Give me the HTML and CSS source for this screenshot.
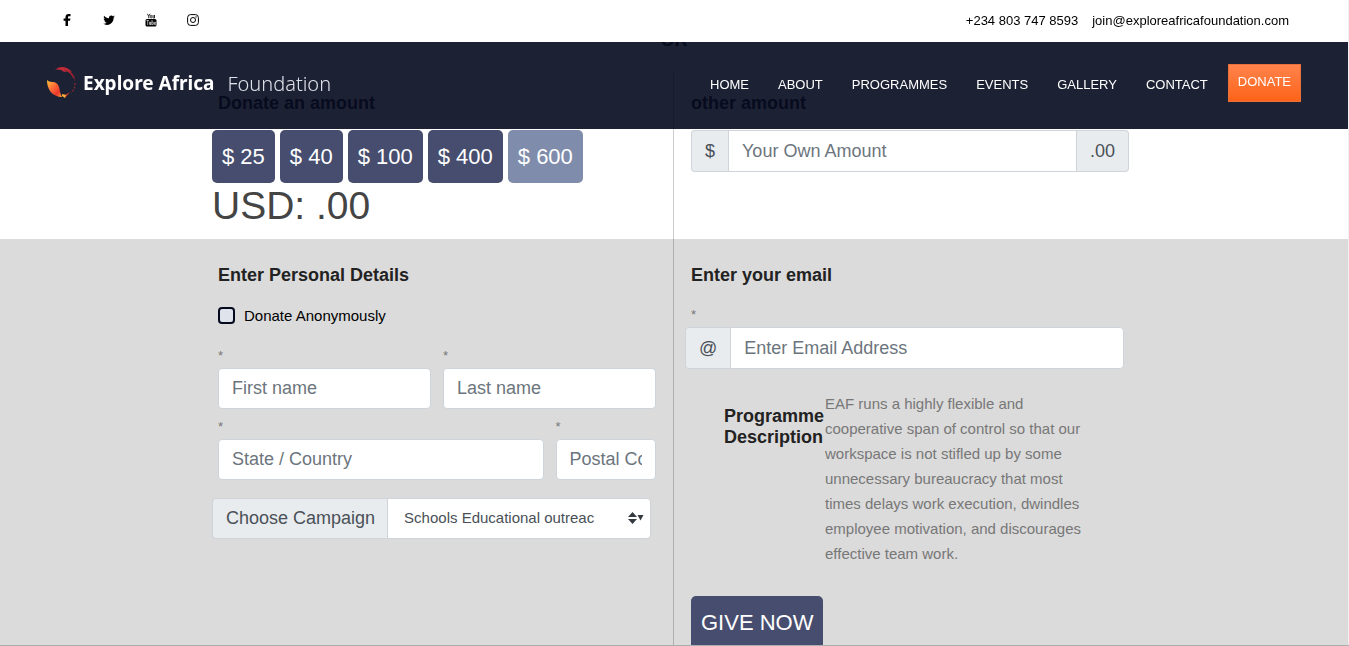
FILE: index.html
```html
<!DOCTYPE html>
<html lang="en">
<head>
<meta charset="utf-8">
<meta name="viewport" content="width=device-width, initial-scale=1">
<title>Explore Africa Foundation - Donate</title>
<link rel="stylesheet" href="styles.css">
</head>
<body>
<header class="site-header">
  <div class="topbar">
    <div class="social">
      <a href="#" aria-label="Facebook"><svg width="14" height="14" viewBox="0 0 14 14"><path d="M10.500 1v2.200H9.100c-.9 0-1.100.4-1.100 1v1.200h2.400L10 7.700H8V13H5.500V7.700H3.600V5.400h1.900V4c0-2 1.200-3.100 3-3.100z"/></svg></a>
      <a href="#" aria-label="Twitter"><svg width="14" height="14" viewBox="-2 -2 28 28"><path d="M23.600 5c-.9.400-1.800.600-2.700.8 1-.6 1.700-1.500 2.100-2.600-.9.500-1.900.9-3 1.100a4.800 4.800 0 0 0-8.100 4.300C8 8.400 4.500 6.500 2.100 3.600a4.800 4.800 0 0 0 1.500 6.300c-.8 0-1.500-.2-2.200-.6 0 2.300 1.600 4.300 3.800 4.800-.7.200-1.400.2-2.100.1.600 1.900 2.400 3.200 4.400 3.300A9.500 9.500 0 0 1 .5 19.500 13.500 13.500 0 0 0 21.200 7.500C22.200 6.800 23 6 23.600 5z"/></svg></a>
      <a href="#" aria-label="YouTube"><svg width="14" height="14" viewBox="0 0 14 14"><path d="M3.400.8l1.300 2.500v2M6 .8L4.700 3.300" fill="none" stroke="#000" stroke-width=".8"/><rect x="6.300" y="2.300" width="1.500" height="2.800" rx=".7" fill="none" stroke="#000" stroke-width=".7"/><path d="M9 2v2.600c0 .7.900.5 1.400 0V2v3.300" fill="none" stroke="#000" stroke-width=".7"/><rect x="1.500" y="6" width="11" height="7.400" rx="1.500"/><path d="M2.500 7.500h2.400M3.700 7.500v4.500M5.500 8.800v2.500c0 .7.800.5 1.300 0V8.800v3.200M8 7v5M8 9.300c1-.7 1.400-.3 1.400.3v1.300c0 .8-.5 1-1.400.5M11.800 11c0 1.200-1.400 1.200-1.400 0V9.800c0-1.200 1.400-1.200 1.400 0v.5h-1.400" fill="none" stroke="#fff" stroke-width=".6"/></svg></a>
      <a href="#" aria-label="Instagram"><svg width="14" height="14" viewBox="0 0 14 14" fill="none" stroke="#000"><rect x="1.600" y="1.600" width="10.800" height="10.800" rx="3"/><circle cx="7" cy="7" r="2.500"/><circle cx="10" cy="4" r=".7" fill="#000" stroke="none"/></svg></a>
    </div>
    <div class="contact"><a href="#">+234 803 747 8593</a><a href="#">join@exploreafricafoundation.com</a></div>
  </div>
  <div class="navbar">
    <a class="brand" href="#">
      <svg width="32" height="34" viewBox="0 0 32 34" aria-hidden="true">
        <defs><linearGradient id="ember" x1="0" y1="0" x2="1" y2="1"><stop offset="0" stop-color="#ffc83a"/><stop offset=".4" stop-color="#ff7038"/><stop offset=".75" stop-color="#e9372c"/><stop offset="1" stop-color="#f9a52f"/></linearGradient></defs>
        <path d="M1 14c1 1 3 2 5 2 4 0 6 2 7 5 1 3 1 7 3 10-4 0-9-2-12-6-2-3-3-7-3-11z" fill="url(#ember)"/>
        <path d="M9 4c4-4 11-4 16 1l1 2c-2-2-5-2-8-1-2-2-5-3-9-2z" fill="#c42a38"/>
        <path d="M18 4c4 0 8 4 10 8" fill="none" stroke="#a82835" stroke-width="1.500"/>
        <path d="M23 5c4 2 7 7 6 11l-1-4c-1-3-3-5-5-7z" fill="#7e202f"/>
        <path d="M29 17c0 4-1 7-4 10" fill="none" stroke="#8a2b2c" stroke-width="1.300" stroke-dasharray="2 1.500"/>
        <path d="M24 26c-1 2-3 3-5 6-1-1-2-2-2-3 2 0 5-1 7-3z" fill="#d9452d"/>
        <path d="M16 28l4 1-1 3-3-2z" fill="#f6ad35"/>
      </svg>
      <span class="brand-name">Explore Africa</span>
      <span class="brand-kind">Foundation</span>
    </a>
    <nav class="menu">
      <a href="#">HOME</a><a href="#">ABOUT</a><a href="#">PROGRAMMES</a><a href="#">EVENTS</a><a href="#">GALLERY</a><a href="#">CONTACT</a>
      <a class="donate" href="#">DONATE</a>
    </nav>
  </div>
</header>
<main>
  <form class="donation">
    <section class="band amounts">
      <h4 class="or">OR</h4>
      <div class="columns">
        <div class="column">
          <h4>Donate an amount</h4>
          <div class="outdent presets">
            <button type="button">$ 25</button><button type="button">$ 40</button><button type="button">$ 100</button><button type="button">$ 400</button><button type="button" class="active">$ 600</button>
          </div>
          <p class="outdent total">USD: .00</p>
        </div>
        <div class="column">
          <h4><label for="own">other amount</label></h4>
          <div class="group"><span class="addon">$</span><input id="own" type="text" placeholder="Your Own Amount"><span class="addon">.00</span></div>
        </div>
      </div>
    </section>
    <section class="band details">
      <div class="columns">
        <div class="column">
          <h4>Enter Personal Details</h4>
          <label class="check"><input type="checkbox">Donate Anonymously</label>
          <div class="fields">
            <div class="field half"><label for="first">*</label><input id="first" type="text" placeholder="First name"></div>
            <div class="field half"><label for="last">*</label><input id="last" type="text" placeholder="Last name"></div>
            <div class="field wide"><label for="state">*</label><input id="state" type="text" placeholder="State / Country"></div>
            <div class="field narrow"><label for="postal">*</label><input id="postal" type="text" placeholder="Postal Code"></div>
          </div>
          <div class="group outdent campaign">
            <label class="addon" for="campaign">Choose Campaign</label>
            <div class="select">
              <select id="campaign"><option>Schools Educational outreac</option></select>
              <svg width="16" height="12" viewBox="0 0 16 12" aria-hidden="true"><path d="M0 5L4.500 0 9 5zM0 7h9l-4.500 5zM9.500 3h6L12.500 8.500z" fill="#343a40"/></svg>
            </div>
          </div>
        </div>
        <div class="column">
          <h4>Enter your email</h4>
          <div class="field email"><label for="email">*</label>
            <div class="group outdent"><span class="addon at">@</span><input id="email" type="email" placeholder="Enter Email Address"></div>
          </div>
          <div class="programme">
            <h4>Programme Description</h4>
            <p>EAF runs a highly flexible and cooperative span of control so that our workspace is not stifled up by some unnecessary bureaucracy that most times delays work execution, dwindles employee motivation, and discourages effective team work.</p>
          </div>
          <button class="give" type="submit">GIVE NOW</button>
        </div>
      </div>
    </section>
  </form>
</main>
</body>
</html>
```
FILE: styles.css
```css
* { box-sizing: border-box; }
body {
  margin: 0;
  height: 100vh;
  overflow: hidden;
  font-family: "Liberation Sans", Arial, sans-serif;
  font-size: 15px;
  line-height: 25px;
  color: #777;
  background: #fff;
  border-right: 1px solid #f0f0f0;
}
body::after {
  content: "";
  position: fixed;
  inset: auto 0 0;
  height: 1px;
  background: #adadad;
}
a { text-decoration: none; color: inherit; }
p { margin: 0; }
h4 { margin: 0; font-size: 18px; line-height: 21px; font-weight: 700; color: #222; }
input, button, select { font-family: inherit; }

.site-header { position: fixed; inset: 0 1px auto 0; z-index: 10; }
.topbar {
  display: flex;
  justify-content: space-between;
  align-items: center;
  height: 42px;
  padding: 0 59px 2px 60px;
  background: #fff;
  color: #000;
}
.social { display: flex; gap: 28px; }
.social a { display: flex; }
.contact { display: flex; gap: 14px; font-size: 13px; }
.navbar {
  display: flex;
  justify-content: space-between;
  align-items: center;
  height: 87px;
  padding: 0 47px 5px 46px;
  background: rgba(4, 9, 30, .9);
}
.brand { display: flex; align-items: center; gap: 5px; font-family: "Noto Sans", sans-serif; font-size: 19px; color: #fff; }
.brand-name { font-weight: 700; }
.brand-kind { margin-left: 8px; font-size: 20px; font-weight: 300; color: #dfe1ea; }
.menu { display: flex; align-items: center; gap: 29px; font-size: 13px; color: #fff; }
.menu a { padding-top: 2px; }
.menu .donate {
  margin-left: -9px;
  padding: 4px 9px 7px;
  border: 1px solid #e8703a;
  background: linear-gradient(#ff834c, #fd6318);
}

.band { padding: 0 15px; }
.columns { display: grid; grid-template-columns: 1fr 1fr; max-width: 940px; margin: 0 auto; }
.column { min-width: 0; padding: 0 15px 0 17px; }
.column:first-child { padding: 0 17px 0 14px; border-right: 1px solid #0003; }
.outdent { margin-left: -6px; }
.amounts { padding-top: 30px; }
.or { text-align: center; }
.amounts .columns { margin-top: 20px; }
.amounts .column { padding-top: 22px; min-height: 168px; }
.amounts h4 { margin-bottom: 16px; }
.amounts .or { margin: 0; }
.presets { display: flex; gap: 5px; }
.presets button, .give {
  padding: 10px;
  border: 0;
  border-radius: 5px;
  background: #464d6e;
  color: #fff;
  font-size: 22px;
  line-height: 33px;
}
.presets .active { background: #7f8cab; }
.total { font-size: 39px; line-height: 45px; color: #444; }

input[type="text"], input[type="email"] {
  width: 100%;
  min-width: 0;
  height: 42px;
  padding: 0 13px;
  border: 1px solid #ced4da;
  border-radius: 4px;
  background: #fff;
  font-size: 18px;
}
::placeholder { color: #6c757d; opacity: 1; }
.group { display: flex; }
.addon {
  padding: 0 13px;
  border: 1px solid #ced4da;
  border-radius: 4px;
  background: #e9ecef;
  color: #495057;
  font-size: 18px;
  line-height: 40px;
}
.group .addon:first-child { border-right: 0; border-radius: 4px 0 0 4px; }
.group .addon:last-child { border-left: 0; border-radius: 0 4px 4px 0; }
.group input[type] { flex: 1; border-radius: 0; }
.group input[type]:last-child { border-radius: 0 4px 4px 0; }

.details { background: #dbdbdb; }
.details .column { min-height: 460px; padding-top: 26px; }
.check { display: flex; align-items: center; gap: 9px; margin-top: 17px; color: #000; }
.check input {
  appearance: none;
  width: 17px;
  height: 17px;
  margin: 0;
  border: 2px solid #04091e;
  border-radius: 4px;
  background: #dfe3ec;
}
.fields { display: grid; grid-template-columns: repeat(4, 1fr); gap: 5px 12px; margin-top: 15px; }
.half { grid-column: span 2; }
.wide { grid-column: span 3; }
.field label { display: block; font-size: 13px; line-height: 25px; }
.fields input[type="text"] { display: block; height: 41px; }
.campaign { margin-top: 18px; margin-right: 5px; }
.campaign .addon { padding-right: 12px; line-height: 39px; }
.select { position: relative; flex: 1; min-width: 0; }
.select select {
  appearance: none;
  display: block;
  width: 100%;
  height: 41px;
  padding: 0 16px 2px;
  border: 1px solid #ced4da;
  border-radius: 0 4px 4px 0;
  background: #fff;
  color: #495057;
  font-size: 15px;
}
.select svg { position: absolute; right: 7px; top: 14px; pointer-events: none; }
.email { margin: 16px 5px 0 0; }
.programme { display: grid; grid-template-columns: 101px 1fr; padding: 22px 36px 0 33px; }
.programme h4 { margin-top: 15px; }
.give { display: block; margin-top: 30px; }
```
